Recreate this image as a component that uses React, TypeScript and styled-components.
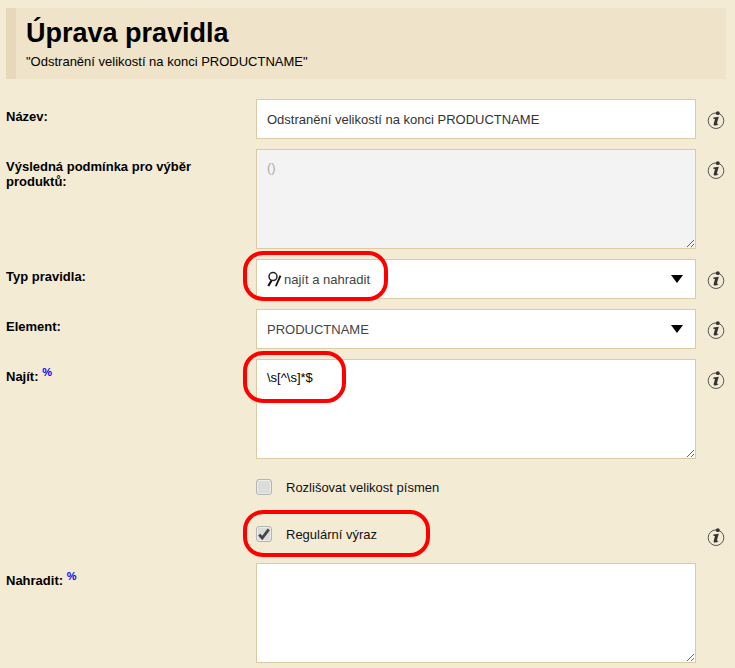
import React from 'react'
import styled, { createGlobalStyle } from 'styled-components'

const GlobalStyle = createGlobalStyle`
  html, body {
    margin: 0;
    padding: 0;
    height: 668px;
    overflow: hidden;
    background: #f4ebd5;
    font-family: 'Liberation Sans', Arial, sans-serif;
    color: #000;
  }
`

const Page = styled.div`
  padding: 8px 9px 0 6px;
`

const Header = styled.header`
  height: 71px;
  box-sizing: border-box;
  background: #efe3c9;
  border-left: 10px solid #e6d8b8;
  padding: 10px 10px 0;
  margin-bottom: 20px;
`

const Title = styled.h1`
  margin: 0;
  font-size: 27px;
  line-height: 30px;
  font-weight: 700;
`

const Subtitle = styled.p`
  margin: 6px 0 0;
  font-size: 13px;
  line-height: 15px;
`

const Form = styled.div`
  display: grid;
  grid-template-columns: 250px 440px 30px;
  row-gap: 10px;
`

const Label = styled.label`
  font-size: 13px;
  line-height: 15px;
  font-weight: 700;
  padding: 10px 30px 0 0;
`

const Percent = styled.sup`
  color: #0000ff;
  font-size: 11px;
  line-height: 0;
`

const Field = styled.div`
  position: relative;
  display: flex;
`

const CheckField = styled(Field)`
  grid-column: 2;
`

const TextInput = styled.input`
  width: 100%;
  height: 40px;
  box-sizing: border-box;
  border: 1px solid #dccba2;
  background: #fff;
  padding: 0 10px;
  font: 13px 'Liberation Sans', Arial, sans-serif;
  color: #333;
  outline: none;
`

const TextArea = styled.textarea<{ $disabled?: boolean }>`
  display: block;
  width: 100%;
  height: 100px;
  box-sizing: border-box;
  border: 1px solid #dccba2;
  background: ${(p) => (p.$disabled ? '#f3f3f3' : '#fff')};
  padding: 10px;
  font: 13px/15px 'Liberation Sans', Arial, sans-serif;
  color: ${(p) => (p.$disabled ? '#aaa' : '#000')};
  outline: none;
  resize: vertical;
`

const Select = styled.div`
  width: 100%;
  height: 40px;
  box-sizing: border-box;
  border: 1px solid #dccba2;
  background: #fff;
  padding: 0 12px 0 10px;
  display: flex;
  align-items: center;
  justify-content: space-between;
  font-size: 13px;
  color: #444;
`

const SelectValue = styled.span`
  display: flex;
  align-items: center;
  gap: 2px;
`

const Caret = styled.span`
  width: 0;
  height: 0;
  border-left: 6px solid transparent;
  border-right: 6px solid transparent;
  border-top: 8px solid #000;
`

const InfoCell = styled.div<{ $top?: number }>`
  display: flex;
  justify-content: flex-end;
  align-items: flex-start;
  padding: ${(p) => p.$top ?? 11}px 1px 0 0;
`

const CheckRow = styled.div<{ $height: number }>`
  grid-column: 2;
  display: flex;
  align-items: center;
  gap: 14px;
  height: ${(p) => p.$height}px;
  font-size: 13px;
  color: #111;
`

const CheckBox = styled.span`
  width: 16px;
  height: 16px;
  box-sizing: border-box;
  border: 1px solid #b4b4b4;
  border-radius: 3px;
  background: #dcdcdc;
  box-shadow: inset 0 0 0 1px #ececec;
  display: flex;
  align-items: center;
  justify-content: center;
`

const Mark = styled.span<{ $width: number; $height: number; $top: number }>`
  position: absolute;
  left: -13px;
  top: ${(p) => p.$top}px;
  width: ${(p) => p.$width}px;
  height: ${(p) => p.$height}px;
  box-sizing: border-box;
  border: 4px solid #f00;
  border-radius: 20px;
  pointer-events: none;
`

const InfoIcon = () => (
  <svg width="18" height="20" viewBox="0 0 18 20">
    <circle cx="9" cy="10.7" r="7.8" fill="none" stroke="#555" strokeWidth="1" />
    <circle cx="10.8" cy="3.2" r="1.9" fill="#333" />
    <path d="M6.4 7.6 L11.8 6.8 L9.9 13.2 Q9.7 14.2 10.8 13.6 L11.3 14.5 Q8.9 16 7.2 15.4 Q6.2 14.9 6.8 13.4 L8 9 L6.3 8.8 Z" fill="#333" />
  </svg>
)

const FindReplaceIcon = () => (
  <svg width="15" height="17" viewBox="0 0 15 17">
    <circle cx="6" cy="5.6" r="4" fill="none" stroke="#222" strokeWidth="1.5" />
    <path d="M3.6 9 L0.4 14.6 L2.2 15.4 L5.2 10.4 Z" fill="#111" />
    <path d="M12.6 4.2 L8 15 L9.6 15.6 L14.4 5 Z" fill="#111" />
  </svg>
)

const CheckIcon = () => (
  <svg width="14" height="14" viewBox="0 0 14 14">
    <path d="M2.2 7.6 L5.2 11 L11.8 2.4" fill="none" stroke="#444" strokeWidth="2.8" />
  </svg>
)

const Info = ({ top }: { top?: number }) => (
  <InfoCell $top={top}>
    <InfoIcon />
  </InfoCell>
)

export default function App() {
  return (
    <Page>
      <GlobalStyle />
      <Header>
        <Title>Úprava pravidla</Title>
        <Subtitle>"Odstranění velikostí na konci PRODUCTNAME"</Subtitle>
      </Header>
      <Form>
        <Label>Název:</Label>
        <Field>
          <TextInput readOnly value="Odstranění velikostí na konci PRODUCTNAME" />
        </Field>
        <Info />

        <Label>Výsledná podmínka pro výběr produktů:</Label>
        <Field>
          <TextArea $disabled readOnly value="()" />
        </Field>
        <Info />

        <Label>Typ pravidla:</Label>
        <Field>
          <Select>
            <SelectValue>
              <FindReplaceIcon /> najít a nahradit
            </SelectValue>
            <Caret />
          </Select>
          <Mark $width={145} $height={50} $top={-8} />
        </Field>
        <Info />

        <Label>Element:</Label>
        <Field>
          <Select>
            <SelectValue>PRODUCTNAME</SelectValue>
            <Caret />
          </Select>
        </Field>
        <Info />

        <Label>
          Najít: <Percent>%</Percent>
        </Label>
        <Field>
          <TextArea readOnly value="\s[^\s]*$" />
          <Mark $width={103} $height={52} $top={-8} />
        </Field>
        <Info />

        <CheckRow $height={36}>
          <CheckBox />
          Rozlišovat velikost písmen
        </CheckRow>

        <CheckField>
          <CheckRow $height={38}>
            <CheckBox>
              <CheckIcon />
            </CheckBox>
            Regulární výraz
          </CheckRow>
          <Mark $width={187} $height={47} $top={-5} />
        </CheckField>
        <Info top={12} />

        <Label>
          Nahradit: <Percent>%</Percent>
        </Label>
        <Field>
          <TextArea readOnly value="" />
        </Field>
      </Form>
    </Page>
  )
}
